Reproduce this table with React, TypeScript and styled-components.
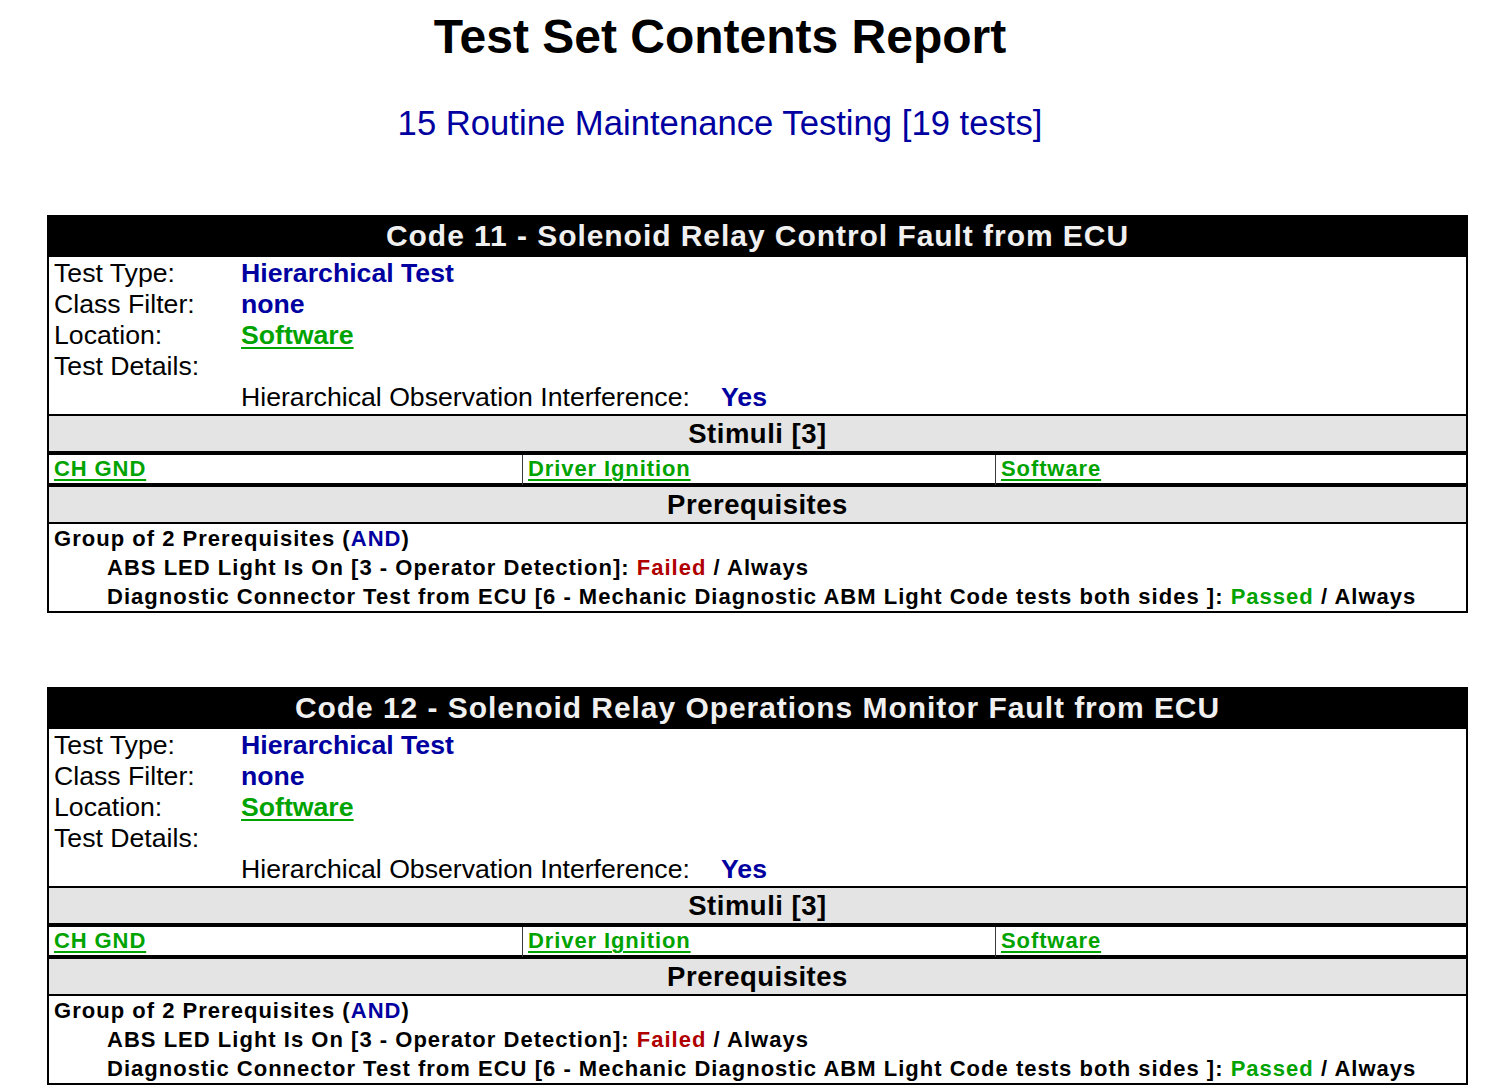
import React from "react";
import styled, { createGlobalStyle } from "styled-components";

const GlobalStyle = createGlobalStyle`
  html, body {
    margin: 0;
    padding: 0;
    background: #ffffff;
  }
  body {
    font-family: "Liberation Sans", Arial, sans-serif;
    color: #000000;
  }
`;

const BLUE = "#0000a0";
const GREEN = "#00a300";
const RED = "#b00000";
const GRAY = "#e4e4e4";

const Page = styled.div`
  width: 1496px;
  padding-top: 9px;
  padding-bottom: 40px;
`;

const Title = styled.h1`
  margin: 0;
  width: 1440px;
  text-align: center;
  font-size: 48px;
  font-weight: 700;
  line-height: 55px;
`;

const Subtitle = styled.h2`
  margin: 39px 0 0;
  width: 1440px;
  text-align: center;
  font-size: 34.67px;
  font-weight: 400;
  line-height: 40px;
  color: ${BLUE};
`;

const TestList = styled.div`
  display: flex;
  flex-direction: column;
  gap: 74px;
  margin-top: 72px;
  margin-left: 47px;
`;

const TestTable = styled.section`
  width: 1421px;
  box-sizing: border-box;
  border-left: 2px solid #000;
  border-right: 2px solid #000;
  border-bottom: 2px solid #000;
`;

const TableHeader = styled.div`
  height: 42px;
  margin: 0 -2px;
  background: #000;
  color: #f0f0f0;
  display: flex;
  align-items: center;
  justify-content: center;
  font-size: 30px;
  font-weight: 700;
  letter-spacing: 0.95px;
`;

const Info = styled.div`
  padding: 1px 0 1px 5px;
  border-bottom: 2px solid #000;
`;

const InfoRow = styled.div`
  display: grid;
  grid-template-columns: 187px 1fr;
  height: 31px;
  line-height: 31px;
  font-size: 26.67px;
`;

const Label = styled.span`
  font-weight: 400;
  white-space: nowrap;
`;

const Value = styled.span<{ $tone: "blue" | "green" }>`
  font-weight: 700;
  white-space: nowrap;
  color: ${(p) => (p.$tone === "green" ? GREEN : BLUE)};
  ${(p) =>
    p.$tone === "green"
      ? `text-decoration: underline; text-decoration-thickness: 2px; text-underline-offset: 3px;`
      : ""}
`;

const DetailRow = styled.div`
  display: grid;
  grid-template-columns: 480px 1fr;
  padding-left: 187px;
  height: 31px;
  line-height: 31px;
  font-size: 26.67px;
`;

const SectionHeader = styled.div<{ $thick?: boolean }>`
  height: 35px;
  background: ${GRAY};
  display: flex;
  align-items: center;
  justify-content: center;
  font-size: 27.5px;
  font-weight: 700;
  letter-spacing: 0.5px;
  border-bottom: ${(p) => (p.$thick ? "4px" : "2px")} solid #000;
`;

const StimuliRow = styled.div`
  display: grid;
  grid-template-columns: 473px 473px 1fr;
  height: 28px;
  border-bottom: 4px solid #000;
`;

const StimulusCell = styled.div<{ $first?: boolean }>`
  padding-left: 5px;
  line-height: 28px;
  border-left: ${(p) => (p.$first ? "none" : "1px solid #3a3a3a")};
`;

const LinkText = styled.span`
  font-size: 22px;
  font-weight: 700;
  letter-spacing: 0.9px;
  color: ${GREEN};
  text-decoration: underline;
  text-decoration-thickness: 2px;
  text-underline-offset: 3px;
`;

const Prereqs = styled.div`
  padding-left: 5px;
`;

const PrereqLine = styled.div<{ $indent?: boolean }>`
  height: 29px;
  line-height: 29px;
  padding-left: ${(p) => (p.$indent ? "53px" : "0")};
  font-size: 22px;
  font-weight: 700;
  letter-spacing: 1.02px;
  white-space: nowrap;
`;

const Colored = styled.span<{ $color: string }>`
  color: ${(p) => p.$color};
`;

type Prereq = { name: string; result: "Failed" | "Passed"; when: string };

type Test = {
  title: string;
  type: string;
  classFilter: string;
  location: string;
  interference: string;
  stimuli: string[];
  group: { count: number; op: string };
  prereqs: Prereq[];
};

const prereqs: Prereq[] = [
  { name: "ABS LED Light Is On [3 - Operator Detection]", result: "Failed", when: "Always" },
  {
    name: "Diagnostic Connector Test from ECU [6 - Mechanic Diagnostic ABM Light Code tests both sides ]",
    result: "Passed",
    when: "Always",
  },
];

const tests: Test[] = [
  {
    title: "Code 11 - Solenoid Relay Control Fault from ECU",
    type: "Hierarchical Test",
    classFilter: "none",
    location: "Software",
    interference: "Yes",
    stimuli: ["CH GND", "Driver Ignition", "Software"],
    group: { count: 2, op: "AND" },
    prereqs,
  },
  {
    title: "Code 12 - Solenoid Relay Operations Monitor Fault from ECU",
    type: "Hierarchical Test",
    classFilter: "none",
    location: "Software",
    interference: "Yes",
    stimuli: ["CH GND", "Driver Ignition", "Software"],
    group: { count: 2, op: "AND" },
    prereqs,
  },
];

function TestBlock({ test }: { test: Test }) {
  return (
    <TestTable>
      <TableHeader>{test.title}</TableHeader>
      <Info>
        <InfoRow>
          <Label>Test Type:</Label>
          <Value $tone="blue">{test.type}</Value>
        </InfoRow>
        <InfoRow>
          <Label>Class Filter:</Label>
          <Value $tone="blue">{test.classFilter}</Value>
        </InfoRow>
        <InfoRow>
          <Label>Location:</Label>
          <span>
            <Value $tone="green">{test.location}</Value>
          </span>
        </InfoRow>
        <InfoRow>
          <Label>Test Details:</Label>
          <span />
        </InfoRow>
        <DetailRow>
          <Label>Hierarchical Observation Interference:</Label>
          <Value $tone="blue">{test.interference}</Value>
        </DetailRow>
      </Info>
      <SectionHeader $thick>Stimuli [{test.stimuli.length}]</SectionHeader>
      <StimuliRow>
        {test.stimuli.map((s, i) => (
          <StimulusCell key={s} $first={i === 0}>
            <LinkText>{s}</LinkText>
          </StimulusCell>
        ))}
      </StimuliRow>
      <SectionHeader>Prerequisites</SectionHeader>
      <Prereqs>
        <PrereqLine>
          Group of {test.group.count} Prerequisites (<Colored $color={BLUE}>{test.group.op}</Colored>)
        </PrereqLine>
        {test.prereqs.map((p) => (
          <PrereqLine key={p.name} $indent>
            {p.name}: <Colored $color={p.result === "Failed" ? RED : GREEN}>{p.result}</Colored> / {p.when}
          </PrereqLine>
        ))}
      </Prereqs>
    </TestTable>
  );
}

export default function App() {
  return (
    <>
      <GlobalStyle />
      <Page>
        <Title>Test Set Contents Report</Title>
        <Subtitle>15 Routine Maintenance Testing [19 tests]</Subtitle>
        <TestList>
          {tests.map((t) => (
            <TestBlock key={t.title} test={t} />
          ))}
        </TestList>
      </Page>
    </>
  );
}
